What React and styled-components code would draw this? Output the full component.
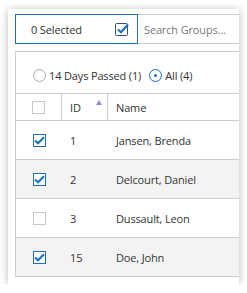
import React, { useState } from 'react';
import styled, { createGlobalStyle } from 'styled-components';

const GlobalStyle = createGlobalStyle`
    html, body {
        margin: 0;
        background: #ffffff;
    }
    body {
        font-family: "Open Sans", "Noto Sans", sans-serif;
        font-size: 11px;
        letter-spacing: -0.15px;
        color: #333333;
    }
`;

const Panel = styled.div`
    margin: 9px 8px 0 8px;
    width: 224px;
    height: 270px;
    padding: 5px 0 0 7px;
    background: #ffffff;
    box-shadow: 0 1px 8px rgba(0, 0, 0, 0.28);
    overflow: hidden;
`;

const Header = styled.div`
    display: flex;
    height: 30px;
    width: 300px;
`;

const SelectBox = styled.div`
    box-sizing: border-box;
    width: 123px;
    height: 30px;
    border: 1px solid #1c6fc2;
    display: flex;
    align-items: center;
    justify-content: space-between;
    padding: 0 8px 0 15px;
    color: #333;
`;

const SearchBox = styled.div`
    box-sizing: border-box;
    flex: 1;
    height: 30px;
    border-top: 1px solid #cccccc;
    border-bottom: 1px solid #cccccc;
    display: flex;
    align-items: center;
    padding-left: 6px;
    color: #7a7a7a;
`;

const Grid = styled.div`
    margin-top: 7px;
    width: 300px;
    border-left: 1px solid #cccccc;
    border-top: 1px solid #cccccc;
`;

const Filters = styled.div`
    display: flex;
    align-items: center;
    height: 42px;
    padding: 5px 0 0 17px;
    box-sizing: border-box;
    border-bottom: 1px solid #cccccc;
`;

const RadioLabel = styled.label`
    display: flex;
    align-items: center;
    gap: 3px;
    margin-right: 8px;
    cursor: pointer;
`;

const RadioCircle = styled.span`
    box-sizing: border-box;
    width: 13px;
    height: 13px;
    border-radius: 50%;
    border: 1px solid ${(p) => (p.$on ? '#1c6fc2' : '#aaaaaa')};
    display: flex;
    align-items: center;
    justify-content: center;
    &::after {
        content: '';
        width: 3px;
        height: 3px;
        border-radius: 50%;
        background: #1c6fc2;
        display: ${(p) => (p.$on ? 'block' : 'none')};
    }
`;

const Row = styled.div`
    display: grid;
    grid-template-columns: 46px 46px 1fr;
    height: ${(p) => (p.$head ? '26px' : '38px')};
    border-bottom: 1px solid #cccccc;
    background: ${(p) => (p.$alt ? '#f3f3f3' : '#ffffff')};
`;

const Cell = styled.div`
    display: flex;
    align-items: center;
    padding-left: 8px;
    position: relative;
    border-right: ${(p) => (p.$divider ? '1px solid #cccccc' : 'none')};
`;

const BoxCell = styled(Cell)`
    justify-content: center;
    padding-left: 0;
`;

const Box = styled.span`
    box-sizing: border-box;
    width: 13px;
    height: 13px;
    border: 1px solid ${(p) => (p.$on ? '#1c6fc2' : '#c8c8c8')};
    background: #ffffff;
    display: flex;
    align-items: center;
    justify-content: center;
`;

const SortArrow = styled.span`
    position: absolute;
    right: 5px;
    top: 6px;
    width: 0;
    height: 0;
    border-left: 3px solid transparent;
    border-right: 3px solid transparent;
    border-bottom: 5px solid #8b8bd8;
`;

const Check = ({ color = '#1c6fc2' }) => (
    <svg width="11" height="9" viewBox="0 0 11 9">
        <path d="M1 4.5 L4 7.3 L10 1.2" fill="none" stroke={color} strokeWidth="2.1" />
    </svg>
);

const HeaderCheck = () => (
    <svg width="14" height="14" viewBox="0 0 14 14">
        <rect x="0.5" y="1.5" width="12" height="12" fill="#fff" stroke="#3a4f7a" strokeWidth="1" rx="1" />
        <path d="M3 7.5 L6 10.3 L13 2.5" fill="none" stroke="#1c6fc2" strokeWidth="2.2" />
    </svg>
);

const rows = [
    { id: 1, name: 'Jansen, Brenda', checked: true },
    { id: 2, name: 'Delcourt, Daniel', checked: true },
    { id: 3, name: 'Dussault, Leon', checked: false },
    { id: 15, name: 'Doe, John', checked: true },
];

const App = () => {
    const [filter, setFilter] = useState('all');

    return (
        <>
            <GlobalStyle />
            <Panel>
                <Header>
                    <SelectBox>
                        <span>0 Selected</span>
                        <HeaderCheck />
                    </SelectBox>
                    <SearchBox>Search Groups...</SearchBox>
                </Header>
                <Grid>
                    <Filters>
                        <RadioLabel onClick={() => setFilter('days')}>
                            <RadioCircle $on={filter === 'days'} />
                            14 Days Passed (1)
                        </RadioLabel>
                        <RadioLabel onClick={() => setFilter('all')}>
                            <RadioCircle $on={filter === 'all'} />
                            All (4)
                        </RadioLabel>
                    </Filters>
                    <Row $head>
                        <BoxCell $divider><Box /></BoxCell>
                        <Cell $divider>ID<SortArrow /></Cell>
                        <Cell>Name</Cell>
                    </Row>
                    {rows.map((r, i) => (
                        <Row key={r.id} $alt={i % 2 === 1}>
                            <BoxCell><Box $on={r.checked}>{r.checked && <Check />}</Box></BoxCell>
                            <Cell>{r.id}</Cell>
                            <Cell>{r.name}</Cell>
                        </Row>
                    ))}
                </Grid>
            </Panel>
        </>
    );
};

export default App;
